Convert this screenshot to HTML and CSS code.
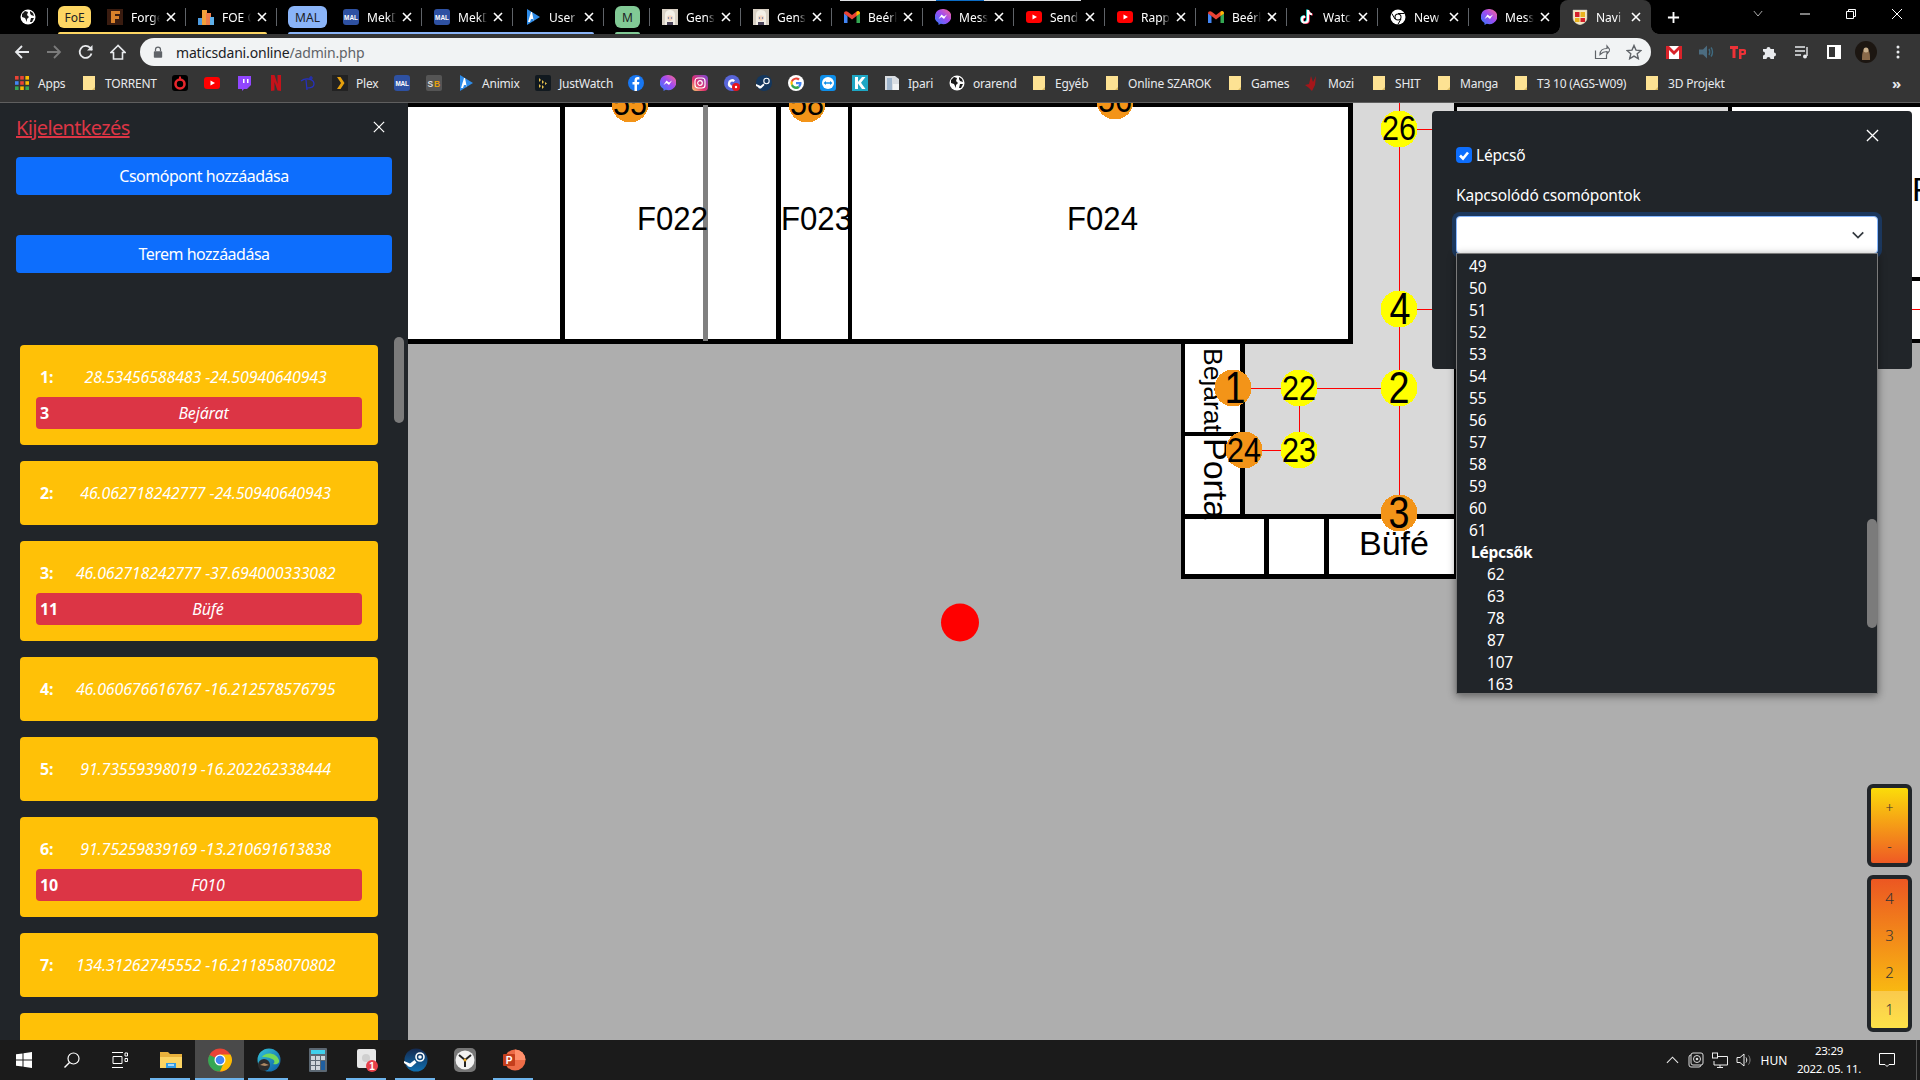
FILE: index.html
```html
<!DOCTYPE html>
<html lang="hu">
<head>
<meta charset="utf-8">
<title>Navigáció</title>
<link rel="stylesheet" href="styles.css">
</head>
<body>
<svg class="defs" aria-hidden="true">
  <defs>
    <symbol id="i-globe" viewBox="0 0 16 16"><circle cx="8" cy="8" r="7.5" fill="#fff"/><path d="M2 5l3-3 3 1-1 3 2 2-2 2v3L5 9 2 8zM10 2l3 2 1 3-3-1-1-2zM11 9l3 0-2 4-2 0z" fill="#1a1a1a"/></symbol>
    <symbol id="i-forge" viewBox="0 0 16 16"><rect width="16" height="16" fill="#3a1c10"/><path d="M4 2h9v3H8v2h4v3H8v4H4z" fill="#d9822b"/></symbol>
    <symbol id="i-city" viewBox="0 0 16 16"><rect x="0" y="9" width="5" height="7" fill="#4d9be0"/><rect x="4" y="1" width="5" height="15" fill="#f2a13a"/><rect x="8" y="4" width="5" height="12" fill="#ef7d4a"/><rect x="12" y="8" width="4" height="8" fill="#5fb0ea"/></symbol>
    <symbol id="i-mal" viewBox="0 0 16 16"><rect width="16" height="16" rx="3" fill="#2e51a2"/><text x="8" y="10.5" text-anchor="middle" font-family="Liberation Sans" font-weight="700" font-size="6.4" fill="#fff">MAL</text></symbol>
    <symbol id="i-anim" viewBox="0 0 16 16"><path d="M2 0L15 8 2 16z" fill="#2d8be8"/><path d="M6 3L3 13h2l1-3h2l1 3h0L7 3z" fill="#fff"/></symbol>
    <symbol id="i-gens" viewBox="0 0 16 16"><rect width="16" height="16" fill="#d8d0c4"/><path d="M3 16V6c0-4 3-5 5-5s5 1 5 5v10z" fill="#f3efe6"/><path d="M5 8c0-2 6-2 6 0 0 3-2 4-3 4S5 11 5 8z" fill="#f5d6c0"/><rect x="5" y="13" width="6" height="3" fill="#474057"/><circle cx="6.5" cy="9" r=".7" fill="#4a6fa8"/><circle cx="9.5" cy="9" r=".7" fill="#4a6fa8"/></symbol>
    <symbol id="i-gmail" viewBox="0 0 16 16"><path d="M0 4v10h3.500V7z" fill="#4285f4"/><path d="M16 4v10h-3.500V7z" fill="#34a853"/><path d="M0 4.500C0 2 2.500 1.500 4 3l4 3 4-3c1.500-1.500 4-1 4 1.500L12.500 7 8 10.500 3.500 7z" fill="#ea4335"/><path d="M12.500 2.800l1 -0.600c1.200-.4 2.500.5 2.500 2.300L12.500 7z" fill="#fbbc04"/></symbol>
    <symbol id="i-mess" viewBox="0 0 16 16"><defs><linearGradient id="mg" x1="0" y1="1" x2="1" y2="0"><stop offset="0" stop-color="#2a7bff"/><stop offset=".55" stop-color="#a24bf0"/><stop offset="1" stop-color="#ff6a8a"/></linearGradient></defs><path d="M8 0a8 7.600 0 0 0-4.500 14v2l2.300-1.200A8 7.600 0 1 0 8 0z" fill="url(#mg)"/><path d="M3.500 10l3-4.500 2.500 2 3-2-3 4.500-2.500-2z" fill="#fff"/></symbol>
    <symbol id="i-yt" viewBox="0 0 16 16"><rect y="2" width="16" height="12" rx="3" fill="#f00"/><path d="M6.500 5.500L11 8l-4.500 2.500z" fill="#fff"/></symbol>
    <symbol id="i-tiktok" viewBox="0 0 16 16"><path d="M8 1h2c.2 2 1.500 3 3 3.200v2c-1.200 0-2.200-.4-3-1v5.300A4 4 0 1 1 6 6.600v2.100A2 2 0 1 0 8 10.500z" fill="#25f4ee" transform="translate(-.8 -.4)"/><path d="M8 1h2c.2 2 1.500 3 3 3.200v2c-1.200 0-2.200-.4-3-1v5.300A4 4 0 1 1 6 6.600v2.100A2 2 0 1 0 8 10.500z" fill="#fe2c55" transform="translate(.8 .4)"/><path d="M8 1h2c.2 2 1.500 3 3 3.200v2c-1.200 0-2.200-.4-3-1v5.300A4 4 0 1 1 6 6.600v2.100A2 2 0 1 0 8 10.500z" fill="#fff"/></symbol>
    <symbol id="i-chromew" viewBox="0 0 16 16"><circle cx="8" cy="8" r="7.500" fill="#fff"/><circle cx="8" cy="8" r="3.500" fill="#000"/><circle cx="8" cy="8" r="2.500" fill="#fff"/><path d="M8 4.500h6.500M5 10L1.800 4.500M11 10l-3.200 5.500" stroke="#000" stroke-width="1"/></symbol>
    <symbol id="i-crest" viewBox="0 0 16 16"><path d="M1 1h14v8c0 4-4 6-7 7-3-1-7-3-7-7z" fill="#f4e7c0" stroke="#bbb" stroke-width=".5"/><rect x="3" y="3" width="4.500" height="5" fill="#d5202a"/><rect x="8.500" y="3" width="4.500" height="5" fill="#e9b21d"/><rect x="3" y="9" width="4.500" height="4" fill="#e9b21d"/><rect x="8.500" y="9" width="4.500" height="4" fill="#d5202a"/></symbol>
    <symbol id="i-folder" viewBox="0 0 16 16"><path d="M2 1h9l3 0v14H2z" fill="#fde293"/><path d="M11 15l3-3v3z" fill="#d8b860"/></symbol>
    <symbol id="i-apps" viewBox="0 0 16 16"><g fill="#ea4335"><rect x="1" y="1" width="3.600" height="3.600"/><rect x="6.200" y="1" width="3.600" height="3.600"/></g><rect x="11.400" y="1" width="3.600" height="3.600" fill="#fbbc04"/><rect x="1" y="6.200" width="3.600" height="3.600" fill="#4285f4"/><rect x="6.200" y="6.200" width="3.600" height="3.600" fill="#ea4335"/><rect x="11.400" y="6.200" width="3.600" height="3.600" fill="#fbbc04"/><rect x="1" y="11.400" width="3.600" height="3.600" fill="#34a853"/><rect x="6.200" y="11.400" width="3.600" height="3.600" fill="#fbbc04"/><rect x="11.400" y="11.400" width="3.600" height="3.600" fill="#34a853"/></symbol>
    <symbol id="i-ring" viewBox="0 0 16 16"><rect width="16" height="16" rx="3" fill="#000"/><circle cx="8" cy="9" r="4.500" fill="none" stroke="#e8262c" stroke-width="2.600"/><rect x="7" y="1.500" width="2" height="4" fill="#e8262c"/></symbol>
    <symbol id="i-twitch" viewBox="0 0 16 16"><path d="M2 1h13v9l-4 4H8l-2 2v-2H2z" fill="#9146ff"/><path d="M7 4h1.500v4H7zM11 4h1.500v4H11z" fill="#fff"/></symbol>
    <symbol id="i-nflx" viewBox="0 0 16 16"><path d="M3 0h3.500l3 9V0H13v16l-3.500-.5-3-8.500v8.500L3 16z" fill="#c4121a"/></symbol>
    <symbol id="i-disney" viewBox="0 0 16 16"><g fill="none" stroke="#2430c4" stroke-width="1.200"><path d="M1 6c5-4 13-2 13 3 0 3-4 4-7 4"/><path d="M6 5l1 10"/><path d="M11 1v4M9 3h4"/></g></symbol>
    <symbol id="i-plex" viewBox="0 0 16 16"><rect width="16" height="16" fill="#222"/><path d="M5 2h3.500l4 6-4 6H5l4-6z" fill="#e5a00d"/></symbol>
    <symbol id="i-sb" viewBox="0 0 16 16"><rect width="16" height="16" rx="2" fill="#555"/><text x="1.500" y="11.500" font-family="Liberation Sans" font-weight="700" font-size="8.500" fill="#ddd">S</text><text x="8" y="11.500" font-family="Liberation Sans" font-weight="700" font-size="8.500" fill="#e5a00d">B</text></symbol>
    <symbol id="i-jw" viewBox="0 0 16 16"><rect width="16" height="16" rx="2" fill="#11191f"/><path d="M4 3l2 2-2 2zM4 9l2 2-2 2zM7 5l2 2-2 2zM7 10l2 2-2 2zM10 7l2 1.500-2 1.500z" fill="#e5c04d"/></symbol>
    <symbol id="i-fb" viewBox="0 0 16 16"><circle cx="8" cy="8" r="8" fill="#1877f2"/><path d="M9 16V9.500h2l.4-2.500H9V5.800c0-.8.300-1.300 1.400-1.300h1V2.300C11 2.200 10.300 2.100 9.700 2.100 7.700 2.100 6.500 3.300 6.500 5.400V7H4.500v2.500h2V16z" fill="#fff"/></symbol>
    <symbol id="i-insta" viewBox="0 0 16 16"><defs><linearGradient id="ig" x1="0" y1="1" x2="1" y2="0"><stop offset="0" stop-color="#feda75"/><stop offset=".4" stop-color="#e1306c"/><stop offset="1" stop-color="#7a4ad8"/></linearGradient></defs><rect width="16" height="16" rx="4" fill="url(#ig)"/><rect x="3" y="3" width="10" height="10" rx="3" fill="none" stroke="#fff" stroke-width="1.200"/><circle cx="8" cy="8" r="2.300" fill="none" stroke="#fff" stroke-width="1.200"/></symbol>
    <symbol id="i-disc" viewBox="0 0 16 16"><circle cx="8" cy="8" r="8" fill="#5865d8"/><path d="M4 8a4 4 0 0 1 7-2.500L9.500 7A2 2 0 1 0 9.500 10l1.500 1.500A4 4 0 0 1 4 8z" fill="#fff"/><circle cx="12" cy="12" r="4" fill="#e8141c"/><circle cx="12" cy="12" r="1.200" fill="#fff"/></symbol>
    <symbol id="i-steam" viewBox="0 0 16 16"><circle cx="8" cy="8" r="8" fill="#14375e"/><circle cx="10.500" cy="6" r="2.700" fill="none" stroke="#fff" stroke-width="1.100"/><path d="M0 9l4.500 2 3-2.500 1 1.500-3 3a2.200 2.200 0 0 1-3.500-1L0 11z" fill="#fff"/></symbol>
    <symbol id="i-google" viewBox="0 0 16 16"><circle cx="8" cy="8" r="8" fill="#fff"/><path d="M13.500 8.200c0-.4 0-.8-.1-1.200H8v2.200h3.100c-.1.800-.6 1.400-1.200 1.800l1.800 1.400c1.100-1 1.800-2.500 1.800-4.200z" fill="#4285f4"/><path d="M8 14c1.600 0 2.900-.5 3.700-1.500L9.900 11c-.5.300-1.100.5-1.900.5-1.500 0-2.800-1-3.200-2.400L3 10.500C3.900 12.600 5.800 14 8 14z" fill="#34a853"/><path d="M4.800 9.100a3.500 3.500 0 0 1 0-2.200L3 5.500a6 6 0 0 0 0 5z" fill="#fbbc04"/><path d="M8 4.500c.9 0 1.600.3 2.200.9l1.600-1.600A6 6 0 0 0 3 5.500l1.800 1.400C5.200 5.500 6.500 4.500 8 4.500z" fill="#ea4335"/></symbol>
    <symbol id="i-tv" viewBox="0 0 16 16"><rect width="16" height="16" rx="3" fill="#0e8ee9"/><circle cx="8" cy="8" r="6" fill="#fff"/><path d="M3.500 8l2.500-2v1.200h4V6l2.500 2-2.500 2V8.800H6V10z" fill="#0e8ee9"/></symbol>
    <symbol id="i-k" viewBox="0 0 16 16"><rect width="16" height="16" fill="#1ea7c5"/><path d="M3 2h3v5l4-5h3.500L9 7.800 13.500 14H10L6 8.500V14H3z" fill="#fff"/></symbol>
    <symbol id="i-doc" viewBox="0 0 16 16"><path d="M1 1h10l4 3v11H1z" fill="#d9dde2"/><path d="M3 3h5v12H3z" fill="#9fb5cc"/><rect x="9" y="9" width="6" height="6" fill="#f1f3f4"/></symbol>
    <symbol id="i-mozi" viewBox="0 0 16 16"><path d="M7 1l2 6 3-6-1 9-3 6-3-3-4-3 4-1z" fill="#a4161a"/></symbol>
    <symbol id="i-x" viewBox="0 0 12 12"><path d="M2 2l8 8M10 2l-8 8" stroke="#fff" stroke-width="1.600" fill="none"/></symbol>
    <symbol id="i-xthin" viewBox="0 0 14 14"><path d="M1 1l12 12M13 1L1 13" stroke="#fff" stroke-width="1.400" fill="none"/></symbol>
  </defs>
</svg>

<div class="tabstrip">
  <div class="loadline"><span class="loadblue"></span></div>
  <div class="search-tabs"><svg class="ico"><use href="#i-globe"/></svg></div>

  <div class="group group-foe">
    <span class="pill pill-foe">FoE</span>
    <div class="tab"><svg class="ico"><use href="#i-forge"/></svg><span class="ttl">Forge</span><svg class="tx"><use href="#i-x"/></svg></div>
    <div class="tab"><svg class="ico"><use href="#i-city"/></svg><span class="ttl">FOE C</span><svg class="tx"><use href="#i-x"/></svg></div>
  </div>
  <div class="group group-mal">
    <span class="pill pill-mal">MAL</span>
    <div class="tab"><svg class="ico"><use href="#i-mal"/></svg><span class="ttl">MekD</span><svg class="tx"><use href="#i-x"/></svg></div>
    <div class="tab"><svg class="ico"><use href="#i-mal"/></svg><span class="ttl">MekD</span><svg class="tx"><use href="#i-x"/></svg></div>
    <div class="tab"><svg class="ico"><use href="#i-anim"/></svg><span class="ttl">User</span><svg class="tx"><use href="#i-x"/></svg></div>
  </div>
  <div class="group group-m">
    <span class="pill pill-m">M</span>
  </div>
  <div class="tab"><svg class="ico"><use href="#i-gens"/></svg><span class="ttl">Gens</span><svg class="tx"><use href="#i-x"/></svg></div>
  <div class="tab"><svg class="ico"><use href="#i-gens"/></svg><span class="ttl">Gens</span><svg class="tx"><use href="#i-x"/></svg></div>
  <div class="tab"><svg class="ico"><use href="#i-gmail"/></svg><span class="ttl">Beérk</span><svg class="tx"><use href="#i-x"/></svg></div>
  <div class="tab"><svg class="ico"><use href="#i-mess"/></svg><span class="ttl">Mess</span><svg class="tx"><use href="#i-x"/></svg></div>
  <div class="tab"><svg class="ico"><use href="#i-yt"/></svg><span class="ttl">Send</span><svg class="tx"><use href="#i-x"/></svg></div>
  <div class="tab"><svg class="ico"><use href="#i-yt"/></svg><span class="ttl">Rapp</span><svg class="tx"><use href="#i-x"/></svg></div>
  <div class="tab"><svg class="ico"><use href="#i-gmail"/></svg><span class="ttl">Beérk</span><svg class="tx"><use href="#i-x"/></svg></div>
  <div class="tab"><svg class="ico"><use href="#i-tiktok"/></svg><span class="ttl">Watc</span><svg class="tx"><use href="#i-x"/></svg></div>
  <div class="tab"><svg class="ico"><use href="#i-chromew"/></svg><span class="ttl">New</span><svg class="tx"><use href="#i-x"/></svg></div>
  <div class="tab tab-noline"><svg class="ico"><use href="#i-mess"/></svg><span class="ttl">Mess</span><svg class="tx"><use href="#i-x"/></svg></div>
  <div class="tab tab-active"><svg class="ico"><use href="#i-crest"/></svg><span class="ttl">Navi</span><svg class="tx"><use href="#i-x"/></svg></div>
  <div class="newtab"><svg viewBox="0 0 14 14" class="plus"><path d="M7 1v12M1 7h12" stroke="#fff" stroke-width="2"/></svg></div>
  <div class="caption">
    <svg class="cap-chev" viewBox="0 0 12 8"><path d="M1 1l5 6 5-6" stroke="#ccc" fill="none"/></svg>
    <div class="capbtn"><svg viewBox="0 0 10 10" class="capico"><path d="M0 5h10" stroke="#fff"/></svg></div>
    <div class="capbtn"><svg viewBox="0 0 10 10" class="capico"><path d="M.5 2.500h7v7h-7zM2.500 2.500v-2h7v7h-2" stroke="#fff" fill="none"/></svg></div>
    <div class="capbtn"><svg viewBox="0 0 10 10" class="capico"><path d="M0 0l10 10M10 0L0 10" stroke="#fff"/></svg></div>
  </div>
</div>

<div class="toolbar">
  <div class="tbtn"><svg viewBox="0 0 16 16" class="tico"><path d="M15 8H2M8 2L2 8l6 6" stroke="#e8eaed" stroke-width="1.800" fill="none"/></svg></div>
  <div class="tbtn"><svg viewBox="0 0 16 16" class="tico"><path d="M1 8h13M8 2l6 6-6 6" stroke="#7b7b7b" stroke-width="1.800" fill="none"/></svg></div>
  <div class="tbtn"><svg viewBox="0 0 16 16" class="tico"><path d="M13.500 9.500A6 6 0 1 1 12 3.700L14 6" stroke="#e8eaed" stroke-width="1.800" fill="none"/><path d="M14.500 1v5.500H9z" fill="#e8eaed"/></svg></div>
  <div class="tbtn"><svg viewBox="0 0 16 16" class="tico"><path d="M8 1.500L1 8.500h2.500V15h9V8.500H15z" stroke="#e8eaed" stroke-width="1.600" fill="none"/></svg></div>
  <div class="omnibox">
    <svg viewBox="0 0 12 14" class="lock"><rect x="1" y="6" width="10" height="8" rx="1" fill="#5f6368"/><path d="M3 6V4a3 3 0 0 1 6 0v2" stroke="#5f6368" stroke-width="1.500" fill="none"/></svg>
    <span class="url"><span class="url-host">maticsdani.online</span>/admin.php</span>
    <svg viewBox="0 0 16 16" class="omni-ico"><path d="M1.500 6.500v8h11v-4M6 10.500c0-4 3-6 7-6V2l3 4-3 4V7.500c-3 0-5 1-7 3z" stroke="#5f6368" stroke-width="1.200" fill="none"/></svg>
    <svg viewBox="0 0 16 16" class="omni-ico"><path d="M8 1.500l2 4.600 5 .4-3.800 3.300 1.100 4.900L8 12.100l-4.300 2.600 1.100-4.900L1 6.500l5-.4z" stroke="#5f6368" stroke-width="1.400" fill="none"/></svg>
  </div>
  <div class="exts">
    <div class="tbtn"><svg viewBox="0 0 16 16" class="tico"><rect x="0" y="2" width="16" height="13" fill="#fff"/><path d="M0 2h3l5 5 5-5h3v13h-3V6L8 11 3 6v9H0z" fill="#d9232a"/></svg></div>
    <div class="tbtn"><svg viewBox="0 0 16 16" class="tico"><path d="M1 5.500h4l4-4v13l-4-4H1z" fill="#4c6c80"/><path d="M11 5c1 1.500 1 4.500 0 6M13 3.500c2 2.500 2 6.500 0 9" stroke="#3f6b80" stroke-width="1.400" fill="none"/></svg></div>
    <div class="tbtn"><svg viewBox="0 0 16 16" class="tico"><path d="M0 2h8v3H5.500v9h-3V5H0zM9 5h4.500A2.800 2.800 0 0 1 13.500 11H11.500v4H9zM11.500 7v2h1.500a1 1 0 0 0 0-2z" fill="#ed3237"/></svg></div>
    <div class="tbtn"><svg viewBox="0 0 16 16" class="tico"><path d="M1 5h3.500a2 2 0 1 1 4 0H12v3.500a2 2 0 1 1 0 4V15H8.500a2 2 0 1 0-4 0H1v-3.500a2 2 0 1 0 0-4z" fill="#e8eaed"/></svg></div>
    <div class="tbtn"><svg viewBox="0 0 16 16" class="tico"><path d="M1 3h10M1 7h10M1 11h6" stroke="#e8eaed" stroke-width="1.600"/><path d="M13 3v9" stroke="#e8eaed" stroke-width="1.400"/><circle cx="11" cy="12.500" r="2" fill="#e8eaed"/></svg></div>
    <div class="tbtn"><svg viewBox="0 0 16 16" class="tico"><path d="M1 1h14v14H1zM3 3v10h6V3z" fill="#fff" fill-rule="evenodd"/></svg></div>
    <div class="tbtn"><svg viewBox="0 0 22 22" class="avatar"><circle cx="11" cy="11" r="11" fill="#1c1611"/><path d="M7 19c0-5 0-10 4-12 4 2 4 7 4 12z" fill="#8a6a4a"/><circle cx="11" cy="9" r="2.500" fill="#c9b08d"/></svg></div>
    <div class="tbtn"><svg viewBox="0 0 4 16" class="kebab"><circle cx="2" cy="3" r="1.500" fill="#e8eaed"/><circle cx="2" cy="8" r="1.500" fill="#e8eaed"/><circle cx="2" cy="13" r="1.500" fill="#e8eaed"/></svg></div>
  </div>
</div>

<div class="bookmarks">
  <div class="bm"><svg class="ico"><use href="#i-apps"/></svg><span class="w27">Apps</span></div>
  <div class="bm"><svg class="ico"><use href="#i-folder"/></svg><span class="w51">TORRENT</span></div>
  <div class="bm"><svg class="ico"><use href="#i-ring"/></svg></div>
  <div class="bm"><svg class="ico"><use href="#i-yt"/></svg></div>
  <div class="bm"><svg class="ico"><use href="#i-twitch"/></svg></div>
  <div class="bm"><svg class="ico"><use href="#i-nflx"/></svg></div>
  <div class="bm"><svg class="ico"><use href="#i-disney"/></svg></div>
  <div class="bm"><svg class="ico"><use href="#i-plex"/></svg><span class="w22">Plex</span></div>
  <div class="bm"><svg class="ico"><use href="#i-mal"/></svg></div>
  <div class="bm"><svg class="ico"><use href="#i-sb"/></svg></div>
  <div class="bm"><svg class="ico"><use href="#i-anim"/></svg><span class="w37">Animix</span></div>
  <div class="bm"><svg class="ico"><use href="#i-jw"/></svg><span class="w53">JustWatch</span></div>
  <div class="bm"><svg class="ico"><use href="#i-fb"/></svg></div>
  <div class="bm"><svg class="ico"><use href="#i-mess"/></svg></div>
  <div class="bm"><svg class="ico"><use href="#i-insta"/></svg></div>
  <div class="bm"><svg class="ico"><use href="#i-disc"/></svg></div>
  <div class="bm"><svg class="ico"><use href="#i-steam"/></svg></div>
  <div class="bm"><svg class="ico"><use href="#i-google"/></svg></div>
  <div class="bm"><svg class="ico"><use href="#i-tv"/></svg></div>
  <div class="bm"><svg class="ico"><use href="#i-k"/></svg></div>
  <div class="bm"><svg class="ico"><use href="#i-doc"/></svg><span class="w25">Ipari</span></div>
  <div class="bm"><svg class="ico"><use href="#i-globe"/></svg><span class="w42">orarend</span></div>
  <div class="bm"><svg class="ico"><use href="#i-folder"/></svg><span class="w33">Egyéb</span></div>
  <div class="bm"><svg class="ico"><use href="#i-folder"/></svg><span class="w83">Online SZAROK</span></div>
  <div class="bm"><svg class="ico"><use href="#i-folder"/></svg><span class="w37">Games</span></div>
  <div class="bm"><svg class="ico"><use href="#i-mozi"/></svg><span class="w27">Mozi</span></div>
  <div class="bm"><svg class="ico"><use href="#i-folder"/></svg><span class="w25">SHIT</span></div>
  <div class="bm"><svg class="ico"><use href="#i-folder"/></svg><span class="w37">Manga</span></div>
  <div class="bm"><svg class="ico"><use href="#i-folder"/></svg><span class="w91">T3 10 (AGS-W09)</span></div>
  <div class="bm"><svg class="ico"><use href="#i-folder"/></svg><span class="w56">3D Projekt</span></div>
  <div class="bm-more">»</div>
</div>

<div class="main">
  <aside class="sidebar">
    <div class="side-head">
      <a class="logout" href="#">Kijelentkezés</a>
      <svg class="side-x"><use href="#i-xthin"/></svg>
    </div>
    <div class="side-actions">
      <button class="btn-primary">Csomópont hozzáadása</button>
      <button class="btn-primary">Terem hozzáadása</button>
    </div>
    <div class="cards">
      <div class="card">
        <div class="row"><b class="num">1:</b><i class="coord">28.53456588483 -24.50940640943</i></div>
        <div class="room"><b class="num">3</b><i class="coord">Bejárat</i></div>
      </div>
      <div class="card">
        <div class="row"><b class="num">2:</b><i class="coord">46.062718242777 -24.50940640943</i></div>
      </div>
      <div class="card">
        <div class="row"><b class="num">3:</b><i class="coord">46.062718242777 -37.694000333082</i></div>
        <div class="room"><b class="num">11</b><i class="coord">Büfé</i></div>
      </div>
      <div class="card">
        <div class="row"><b class="num">4:</b><i class="coord">46.060676616767 -16.212578576795</i></div>
      </div>
      <div class="card">
        <div class="row"><b class="num">5:</b><i class="coord">91.73559398019 -16.202262338444</i></div>
      </div>
      <div class="card">
        <div class="row"><b class="num">6:</b><i class="coord">91.75259839169 -13.210691613838</i></div>
        <div class="room"><b class="num">10</b><i class="coord">F010</i></div>
      </div>
      <div class="card">
        <div class="row"><b class="num">7:</b><i class="coord">134.31262745552 -16.211858070802</i></div>
      </div>
      <div class="card card-tall"></div>
    </div>
    <div class="side-thumb"></div>
  </aside>

  <div class="mapwrap">
    <svg class="map" viewBox="408 103 1512 937" preserveAspectRatio="none">
      <rect x="408" y="103" width="1512" height="937" fill="#aeaeae"/>
      <g fill="#d9d9d9">
        <rect x="1353" y="103" width="103" height="415"/>
        <rect x="1245" y="343" width="108" height="175"/>
        <rect x="1456" y="107" width="272" height="240"/>
      </g>
      <g fill="#fff">
        <rect x="408" y="103" width="945" height="240"/>
        <rect x="1181" y="343" width="64" height="175"/>
        <rect x="1181" y="514" width="275" height="65"/>
        <rect x="1728" y="103" width="192" height="240"/>
      </g>
      <g fill="#000">
        <rect x="408" y="103" width="945" height="4"/>
        <rect x="408" y="339" width="945" height="5"/>
        <rect x="1348" y="103" width="5" height="241"/>
        <rect x="560" y="103" width="5" height="238"/>
        <rect x="776" y="103" width="5" height="238"/>
        <rect x="848" y="103" width="4" height="238"/>
        <rect x="1181" y="343" width="4" height="236"/>
        <rect x="1240" y="343" width="5" height="175"/>
        <rect x="1181" y="432" width="64" height="4"/>
        <rect x="1181" y="514" width="275" height="5"/>
        <rect x="1181" y="574" width="275" height="5"/>
        <rect x="1264" y="514" width="5" height="62"/>
        <rect x="1324" y="514" width="5" height="62"/>
        <rect x="1454" y="107" width="3" height="472"/>
        <rect x="1454" y="103" width="466" height="4"/>
        <rect x="1728" y="103" width="4" height="240"/>
        <rect x="1732" y="277" width="188" height="4"/>
        <rect x="1732" y="339" width="188" height="4"/>
      </g>
      <rect x="703" y="105" width="5" height="236" fill="#808080"/>

      <g class="room-label">
        <text x="637" y="230" textLength="71" lengthAdjust="spacingAndGlyphs">F022</text>
        <text x="781" y="230" textLength="71" lengthAdjust="spacingAndGlyphs">F023</text>
        <text x="1067" y="230" textLength="71" lengthAdjust="spacingAndGlyphs">F024</text>
        <text class="lbl-big" x="1359" y="555">Büfé</text>
        <text x="1912" y="201">F</text>
        <text class="lbl-small" transform="translate(1204 348) rotate(90)">Bejarat</text>
        <text class="lbl-big" transform="translate(1204 438) rotate(90)">Porta</text>
      </g>

      <g stroke="#f00" stroke-width="1">
        <path d="M1399.500 103V513M1399 129.500H1440M1399 309.500H1440M1233 388.500H1399M1299.500 388V450M1244 450.500H1299M1905 309.500H1920"/>
      </g>

      <g class="nodes">
        <circle class="orange" cx="630" cy="104" r="18.500"/>
        <circle class="orange" cx="807" cy="104" r="18.500"/>
        <circle class="orange" cx="1115" cy="101" r="18.500"/>
        <circle class="orange" cx="1558" cy="129" r="18.500"/>
        <circle class="yellow" cx="1399" cy="129" r="18.500"/>
        <circle class="yellow" cx="1399" cy="309" r="18.500"/>
        <circle class="yellow" cx="1399" cy="388" r="18.500"/>
        <circle class="yellow" cx="1299" cy="388" r="18.500"/>
        <circle class="orange" cx="1233" cy="388" r="18.500"/>
        <circle class="yellow" cx="1299" cy="450" r="18.500"/>
        <circle class="orange" cx="1244" cy="450" r="18.500"/>
        <circle class="orange" cx="1399" cy="513" r="18.500"/>
      </g>
      <g class="node-two">
        <text x="630" y="115" textLength="34" lengthAdjust="spacingAndGlyphs">55</text>
        <text x="807" y="115" textLength="34" lengthAdjust="spacingAndGlyphs">58</text>
        <text x="1115" y="112" textLength="34" lengthAdjust="spacingAndGlyphs">56</text>
        <text x="1399" y="140" textLength="34" lengthAdjust="spacingAndGlyphs">26</text>
        <text x="1299" y="400" textLength="34" lengthAdjust="spacingAndGlyphs">22</text>
        <text x="1299" y="462" textLength="34" lengthAdjust="spacingAndGlyphs">23</text>
        <text x="1244" y="462" textLength="34" lengthAdjust="spacingAndGlyphs">24</text>
      </g>
      <g class="node-one">
        <text x="1400" y="324" textLength="21" lengthAdjust="spacingAndGlyphs">4</text>
        <text x="1399" y="403" textLength="21" lengthAdjust="spacingAndGlyphs">2</text>
        <text x="1235" y="403" textLength="21" lengthAdjust="spacingAndGlyphs">1</text>
        <text x="1399" y="528" textLength="21" lengthAdjust="spacingAndGlyphs">3</text>
      </g>
      <circle class="pin" cx="960" cy="622.500" r="19"/>
    </svg>

    <div class="modal">
      <svg class="modal-x"><use href="#i-xthin"/></svg>
      <label class="check-row">
        <span class="checkbox"><svg viewBox="0 0 16 16" class="check"><path d="M4 8.500l3 3 5-6" stroke="#fff" stroke-width="2.600" fill="none"/></svg></span>
        <span>Lépcső</span>
      </label>
      <div class="field-label">Kapcsolódó csomópontok</div>
      <div class="select">
        <svg viewBox="0 0 16 16" class="chev"><path d="M2 5l6 6 6-6" stroke="#343a40" stroke-width="2" fill="none"/></svg>
        <div class="dropdown">
          <div class="opt">49</div>
          <div class="opt">50</div>
          <div class="opt">51</div>
          <div class="opt">52</div>
          <div class="opt">53</div>
          <div class="opt">54</div>
          <div class="opt">55</div>
          <div class="opt">56</div>
          <div class="opt">57</div>
          <div class="opt">58</div>
          <div class="opt">59</div>
          <div class="opt">60</div>
          <div class="opt">61</div>
          <div class="optgroup">Lépcsők</div>
          <div class="opt sub">62</div>
          <div class="opt sub">63</div>
          <div class="opt sub">78</div>
          <div class="opt sub">87</div>
          <div class="opt sub">107</div>
          <div class="opt sub">163</div>
          <div class="dd-thumb"></div>
        </div>
      </div>
    </div>

    <div class="zoomctl">
      <div class="zpanel zpanel-top">
        <div class="zrow zrow-sm">+</div>
        <div class="zrow zrow-sm">-</div>
      </div>
      <div class="zpanel zpanel-bottom">
        <div class="zrow">4</div>
        <div class="zrow">3</div>
        <div class="zrow">2</div>
        <div class="zrow zrow-active">1</div>
      </div>
    </div>
  </div>
</div>

<div class="taskbar">
  <div class="tsys"><svg viewBox="0 0 16 16" class="tk16"><path d="M0 2.300L6.500 1.400V7.500H0zM7.500 1.300L16 0V7.500H7.500zM0 8.500H6.500V14.600L0 13.700zM7.500 8.500H16V16L7.500 14.700z" fill="#fff"/></svg></div>
  <div class="tsys"><svg viewBox="0 0 16 16" class="tk16"><circle cx="9.500" cy="6.500" r="5.500" stroke="#fff" stroke-width="1.200" fill="none"/><path d="M5.500 10.500L.5 15.500" stroke="#fff" stroke-width="1.400"/></svg></div>
  <div class="tsys"><svg viewBox="0 0 16 16" class="tk16"><path d="M0 .5h11M0 15.500h11M1 4.500h9v7H1zM13 1h2.500v3H13zM13 6.500h2.500v3H13z" stroke="#fff" fill="none"/></svg></div>
  <div class="tapp on"><svg viewBox="0 0 24 24" class="tk24"><path d="M1 4h8l2 2h12v4H1z" fill="#e8b13c"/><path d="M1 9h22v11H1z" fill="#fcd462"/><path d="M7 20v-5h10v5z" fill="#2f9be6"/><path d="M9 16h6v2H9z" fill="#fff" opacity=".6"/></svg></div>
  <div class="tapp on active"><svg viewBox="0 0 24 24" class="tk24"><circle cx="12" cy="12" r="11.500" fill="#ea4335"/><path d="M12 12L2 18.500A11.500 11.500 0 0 1 1.500 7z" fill="#34a853"/><path d="M12 12l-10.200 6A11.500 11.500 0 0 0 12 23.500L18 12z" fill="#34a853"/><path d="M12 6.500h10.500A11.500 11.500 0 0 1 12 23.500L17 12z" fill="#fbbc04"/><circle cx="12" cy="12" r="5.500" fill="#fff"/><circle cx="12" cy="12" r="4.300" fill="#4285f4"/></svg></div>
  <div class="tapp on"><svg viewBox="0 0 24 24" class="tk24"><defs><linearGradient id="edg" x1="0" y1="0" x2="1" y2="1"><stop offset="0" stop-color="#34c6d9"/><stop offset="1" stop-color="#0c59a4"/></linearGradient></defs><circle cx="12" cy="12" r="11.500" fill="url(#edg)"/><path d="M5 9c3-5 14-5 17 3 1 3-2 5-6 4 2-1 2-4-1-5-4-2-8-2-10-2z" fill="#72d95b"/><circle cx="7" cy="17" r="6" fill="#2c2c2c"/><path d="M3 17l4-2 5 2-4 1z" fill="#b08a64"/></svg></div>
  <div class="tapp"><svg viewBox="0 0 24 24" class="tk24"><rect x="3" y="0" width="18" height="24" rx="1" fill="#5c6873"/><rect x="5" y="2" width="14" height="4" fill="#3fd0ec"/><g fill="#cfd6dc"><rect x="5" y="8" width="4" height="4"/><rect x="10" y="8" width="4" height="4"/><rect x="5" y="13" width="4" height="4"/><rect x="10" y="13" width="4" height="4"/><rect x="5" y="18" width="4" height="4"/><rect x="10" y="18" width="4" height="4"/></g><rect x="15" y="8" width="4" height="4" fill="#cfd6dc"/><rect x="15" y="13" width="4" height="9" fill="#1f5fa0"/></svg></div>
  <div class="tapp on"><svg viewBox="0 0 24 24" class="tk24"><rect x="2" y="1" width="19" height="19" rx="2" fill="#e7e7e7"/><circle cx="11" cy="10" r="4" fill="#cfcfcf"/><circle cx="17" cy="18" r="6" fill="#e8414a"/><text x="17" y="21.500" text-anchor="middle" font-family="Liberation Sans" font-weight="700" font-size="10" fill="#fff">1</text></svg></div>
  <div class="tapp on"><svg viewBox="0 0 24 24" class="tk24"><defs><linearGradient id="stm" x1="0" y1="0" x2="0" y2="1"><stop offset="0" stop-color="#14294f"/><stop offset="1" stop-color="#0f6fb0"/></linearGradient></defs><circle cx="12" cy="12" r="11.500" fill="url(#stm)"/><circle cx="16" cy="9" r="4" fill="none" stroke="#fff" stroke-width="1.600"/><circle cx="16" cy="9" r="1.800" fill="#fff"/><path d="M0 13l6 2.500 4.500-3.500 2 2.500-4.500 4a3.500 3.500 0 0 1-5-1.500L0 15z" fill="#fff"/></svg></div>
  <div class="tapp"><svg viewBox="0 0 24 24" class="tk24"><rect x="1" y="0" width="22" height="24" rx="5" fill="#777"/><circle cx="12" cy="12" r="9.500" fill="#f2f2f2"/><path d="M12 12L6 7M12 12l6-5M12 12v7" stroke="#222" stroke-width="2"/><circle cx="12" cy="12" r="1.500" fill="#e0a020"/></svg></div>
  <div class="tapp on"><svg viewBox="0 0 24 24" class="tk24"><circle cx="13" cy="12" r="10.500" fill="#ed6c47"/><path d="M13 1.500A10.500 10.500 0 0 1 23.500 12H13z" fill="#ff8f6b"/><rect x="1" y="6" width="12" height="12" rx="1" fill="#c43e1c"/><text x="7" y="15.500" text-anchor="middle" font-family="Liberation Sans" font-weight="700" font-size="10" fill="#fff">P</text></svg></div>

  <div class="tray">
    <div class="tr"><svg viewBox="0 0 14 8" class="tr-chev"><path d="M1 7l6-6 6 6" stroke="#e8e8e8" stroke-width="1.200" fill="none"/></svg></div>
    <div class="tr"><svg viewBox="0 0 16 16" class="tk16"><rect x="1" y="3" width="12" height="12" rx="2" fill="none" stroke="#ddd"/><rect x="3" y="1" width="12" height="12" rx="2" fill="#1b1b1b" stroke="#ddd"/><circle cx="9" cy="7" r="3.500" fill="none" stroke="#ddd"/><circle cx="9" cy="7" r="1.300" fill="#ddd"/></svg></div>
    <div class="tr"><svg viewBox="0 0 16 16" class="tk16"><path d="M4 4.500h11.500v8.500H2V9M8 13v2.500M5 15.500h6" stroke="#eee" fill="none"/><rect x="0.500" y="1" width="5" height="5" fill="#1b1b1b" stroke="#eee"/></svg></div>
    <div class="tr"><svg viewBox="0 0 16 16" class="tk16"><path d="M1 5.500h3L8 2v12L4 10.500H1z" stroke="#eee" fill="none"/><path d="M10 5.500c1 1.500 1 3.500 0 5" stroke="#eee" fill="none"/><path d="M12.500 3.500c2 2.500 2 6.500 0 9" stroke="#888" fill="none"/></svg></div>
    <div class="tr-lang">HUN</div>
    <div class="tr-clock"><span>23:29</span><span>2022. 05. 11.</span></div>
    <div class="tr-notif"><svg viewBox="0 0 16 16" class="tk16"><path d="M.5 1.500h15v11h-5.500L8 14.500l-2-2H.5z" stroke="#fff" fill="none"/></svg></div>
    <div class="tr-show"></div>
  </div>
</div>
</body>
</html>
```

FILE: styles.css
```css
* { box-sizing: border-box; }
html, body { margin: 0; padding: 0; width: 1920px; height: 1080px; overflow: hidden; }
body {
  display: flex;
  flex-direction: column;
  font-family: "Noto Sans", "Open Sans", sans-serif;
  background: #212529;
}
.defs { position: absolute; width: 0; height: 0; }
.ico { width: 16px; height: 16px; flex: none; display: block; }

/* tab strip */
.tabstrip {
  position: relative;
  flex: none;
  height: 34px;
  display: flex;
  background: #000;
  color: #fff;
  font-size: 12px;
}
.loadline { position: absolute; left: 840px; top: 0; width: 241px; height: 1px; background: #dfe1e5; }
.loadblue { position: absolute; left: 96px; top: 0; width: 48px; height: 1px; background: #0b6bc4; }
.search-tabs {
  width: 48px;
  flex: none;
  display: flex;
  align-items: center;
  padding-left: 20px;
}
.search-tabs::after { content: ""; position: absolute; left: 47px; top: 8px; width: 1px; height: 18px; background: #5f6368; }
.group {
  position: relative;
  display: flex;
  margin-left: 10px;
  flex: none;
}
.group-mal { margin-left: 11px; }
.group-m { margin-left: 11px; padding-right: 10px; }
.group-m::before { content: ""; position: absolute; right: 0; top: 8px; width: 1px; height: 18px; background: #5f6368; }
.group::after {
  content: "";
  position: absolute;
  left: 0;
  right: 10px;
  bottom: 0;
  height: 2px;
  border-radius: 2px 2px 0 0;
}
.group-foe::after { background: #fdd663; }
.group-mal::after { background: #8ab4f8; }
.group-m::after { background: #81c995; }
.pill {
  height: 22px;
  margin: 6px 4px 0 0;
  border-radius: 6px;
  display: flex;
  align-items: center;
  justify-content: center;
  color: #202124;
  font-size: 12px;
}
.pill-foe { width: 33px; background: #fdd663; }
.pill-mal { width: 39px; background: #8ab4f8; }
.pill-m { width: 25px; margin-right: 0; background: #81c995; }
.tab {
  position: relative;
  flex: none;
  width: 91px;
  height: 34px;
  display: flex;
  align-items: center;
  padding-left: 12px;
}
.tab::after { content: ""; position: absolute; right: 0; top: 8px; width: 1px; height: 18px; background: #5f6368; }
.tab-noline::after { display: none; }
.ttl {
  width: 29px;
  margin: 0 5px 0 8px;
  overflow: hidden;
  white-space: nowrap;
  -webkit-mask-image: linear-gradient(90deg, #000 70%, transparent);
  mask-image: linear-gradient(90deg, #000 70%, transparent);
}
.tx { width: 12px; height: 12px; flex: none; }
.tab-active {
  background: #353535;
  border-radius: 8px 8px 0 0;
}
.tab-active::before, .tab-active::after {
  content: "";
  position: absolute;
  top: auto;
  bottom: 0;
  width: 8px;
  height: 8px;
}
.tab-active::before { left: -8px; background: radial-gradient(circle at 0 0, #000 7.5px, #353535 8px); }
.tab-active::after { right: -8px; background: radial-gradient(circle at 100% 0, #000 7.5px, #353535 8px); }
.newtab { width: 32px; margin-left: 6px; display: flex; align-items: center; justify-content: center; }
.plus { width: 13px; height: 13px; }
.caption { margin-left: auto; display: flex; align-items: center; }
.cap-chev { width: 10px; height: 7px; margin: 0 19px 7px 0; }
.capbtn { width: 46px; height: 34px; display: flex; align-items: center; justify-content: center; padding-bottom: 6px; }
.capico { width: 10px; height: 10px; }

/* toolbar */
.toolbar {
  flex: none;
  height: 36px;
  display: flex;
  align-items: center;
  background: #353535;
  padding: 0 6px;
}
.tbtn { width: 32px; height: 28px; flex: none; display: flex; align-items: center; justify-content: center; }
.tico { width: 16px; height: 16px; }
.avatar { width: 22px; height: 22px; }
.kebab { width: 4px; height: 16px; }
.omnibox {
  flex: 1;
  height: 28px;
  margin-left: 6px;
  display: flex;
  align-items: center;
  background: #f1f3f4;
  border-radius: 14px;
  padding: 0 9px 0 13px;
  gap: 16px;
}
.lock { width: 10px; height: 12px; flex: none; margin-right: -3px; }
.url { flex: 1; font-size: 14px; color: #5f6368; letter-spacing: -.17px; white-space: nowrap; }
.url-host { color: #202124; }
.omni-ico { width: 16px; height: 16px; flex: none; }
.exts { display: flex; margin-left: 7px; }

/* bookmarks */
.bookmarks {
  flex: none;
  height: 33px;
  display: flex;
  align-items: center;
  background: #353535;
  border-bottom: 1px solid #5f5f5f;
  padding: 0 0 6px 6px;
  color: #e8eaed;
  font-size: 12px;
  letter-spacing: -.2px;
}
.bm { flex: none; display: flex; align-items: center; gap: 8px; padding: 0 8px; white-space: nowrap; }
.w22 { width: 22px; } .w25 { width: 25px; } .w27 { width: 27px; }
.w33 { width: 33px; } .w37 { width: 37px; }
.w42 { width: 42px; } .w51 { width: 51px; } .w53 { width: 53px; } .w56 { width: 56px; }
.w83 { width: 83px; } .w91 { width: 91px; }
.bm-more { margin-left: auto; margin-right: 19px; font-size: 15px; font-weight: 700; }

/* main */
.main { flex: 1; display: flex; min-height: 0; }
.sidebar {
  position: relative;
  width: 408px;
  flex: none;
  background: #212529;
  overflow: hidden;
}
.side-head {
  height: 54px;
  display: flex;
  align-items: center;
  justify-content: space-between;
  padding: 0 23px 6px 16px;
}
.logout { color: #dc3545; font-size: 20px; letter-spacing: -.65px; text-decoration: underline; }
.side-x { width: 12px; height: 12px; }
.side-actions { display: flex; flex-direction: column; gap: 40px; padding-right: 16px; padding-left: 16px; }
.btn-primary {
  height: 38px;
  border: 0;
  border-radius: 4px;
  background: #0d6efd;
  color: #fff;
  font: 16px "Noto Sans", sans-serif;
  letter-spacing: -.5px;
}
.cards {
  display: flex;
  flex-direction: column;
  gap: 16px;
  width: 358px;
  margin: 72px 0 0 20px;
  color: #fff;
  font-size: 16px;
}
.card { background: #ffc107; border-radius: 4px; padding: 16px; display: flex; flex-direction: column; gap: 4px; }
.card-tall { height: 100px; flex: none; }
.row, .room { display: flex; align-items: center; height: 32px; padding: 0 4px; }
.room { background: #dc3545; border-radius: 4px; }
.num { font-weight: 700; letter-spacing: -.2px; }
.coord { flex: 1; text-align: center; letter-spacing: -.15px; white-space: nowrap; }
.side-thumb { position: absolute; left: 394px; top: 234px; width: 10px; height: 86px; border-radius: 5px; background: #7b7b7b; }

/* map */
.mapwrap { position: relative; flex: 1; min-width: 0; }
.map { display: block; width: 100%; height: 100%; }
.room-label text { font-family: "Liberation Sans", sans-serif; font-size: 33px; fill: #000; }
.room-label .lbl-small { font-size: 26.5px; }
.room-label .lbl-big { font-size: 34px; }
.orange { fill: #f39418; shape-rendering: crispEdges; }
.yellow { fill: #ff0; shape-rendering: crispEdges; }
.pin { fill: #f00; }
.node-two text { font-family: "Liberation Sans", sans-serif; font-size: 35px; text-anchor: middle; fill: #000; }
.node-one text { font-family: "Liberation Sans", sans-serif; font-size: 44px; text-anchor: middle; fill: #000; }

/* modal */
.modal {
  position: absolute;
  top: 8px;
  right: 8px;
  width: 480px;
  height: 258px;
  background: #212529;
  border-radius: 4px;
  padding: 36px 34px 0 24px;
  color: #fff;
  font-size: 15.5px;
}
.modal-x { position: absolute; top: 18px; right: 33px; width: 13px; height: 13px; }
.check-row { display: flex; align-items: center; gap: 4px; height: 16px; letter-spacing: -.2px; }
.checkbox { width: 16px; height: 16px; border-radius: 4px; background: #0d6efd; display: flex; }
.check { width: 16px; height: 16px; }
.field-label { margin-top: 20px; height: 24px; line-height: 24px; letter-spacing: -.17px; }
.select {
  position: relative;
  margin-top: 9px;
  height: 38px;
  background: #fff;
  border: 1px solid #86b7fe;
  border-radius: 4px;
  box-shadow: 0 0 0 4px rgba(13, 110, 253, .25);
}
.chev { position: absolute; right: 12px; top: 11px; width: 14px; height: 14px; }
.dropdown {
  position: absolute;
  left: -1px;
  right: -1px;
  top: 36px;
  height: 441px;
  background: #212529;
  border: 1px solid #7a7a7a;
  box-shadow: 0 2px 8px rgba(0, 0, 0, .45);
  overflow: hidden;
  padding-top: 1px;
  z-index: 2;
}
.opt, .optgroup { height: 22px; line-height: 22px; padding-left: 12px; font-size: 15.5px; letter-spacing: -.2px; }
.optgroup { font-weight: 700; padding-left: 14px; }
.opt.sub { padding-left: 30px; }
.dd-thumb { position: absolute; right: 0; top: 265px; width: 10px; height: 109px; border-radius: 5px; background: #7b7b7b; }

/* zoom control */
.zoomctl { position: absolute; right: 8px; bottom: 8px; width: 45px; display: flex; flex-direction: column; gap: 8px; }
.zpanel { border: 4px solid #212529; border-radius: 6px; display: flex; flex-direction: column; overflow: hidden; }
.zpanel-top { height: 83px; background: linear-gradient(180deg, #fbdc0a, #ef5a24); }
.zpanel-bottom { height: 157px; background: linear-gradient(180deg, #ec5722, #fdd80c); }
.zrow { flex: 1; display: flex; align-items: center; justify-content: center; color: #333; font-size: 15px; font-weight: 300; }
.zrow-sm { font-size: 14px; padding-top: 2px; }
.zrow-active { background: rgba(255, 255, 255, .25); }

/* taskbar */
.taskbar {
  flex: none;
  height: 40px;
  display: flex;
  align-items: center;
  background: #1b1b1b;
  color: #fff;
  font-size: 12px;
}
.tsys { width: 48px; height: 40px; flex: none; display: flex; align-items: center; justify-content: center; }
.tsys:nth-child(3) { margin-right: 2px; }
.tk16 { width: 16px; height: 16px; display: block; }
.tk24 { width: 24px; height: 24px; display: block; }
.tapp { position: relative; width: 49px; height: 40px; flex: none; display: flex; align-items: center; justify-content: center; }
.tapp.on::after { content: ""; position: absolute; left: 4px; right: 5px; bottom: 0; height: 2px; background: #6db4ec; }
.tapp.active { background: #4a4a4a; }
.tapp.active::after { left: 0; right: 0; }
.tray { margin-left: auto; display: flex; align-items: center; height: 40px; }
.tr { width: 24px; display: flex; justify-content: center; }
.tr-chev { width: 13px; height: 8px; }
.tr-lang { width: 36px; text-align: center; }
.tr-clock { width: 74px; display: flex; flex-direction: column; align-items: center; line-height: 18px; letter-spacing: -.3px; font-size: 11.5px; }
.tr-notif { width: 42px; display: flex; justify-content: center; }
.tr-show { width: 12px; height: 40px; margin-left: 0; position: relative; }
.tr-show::after { content: ""; position: absolute; left: 8px; top: 0; width: 1px; height: 40px; background: #555; }
```
